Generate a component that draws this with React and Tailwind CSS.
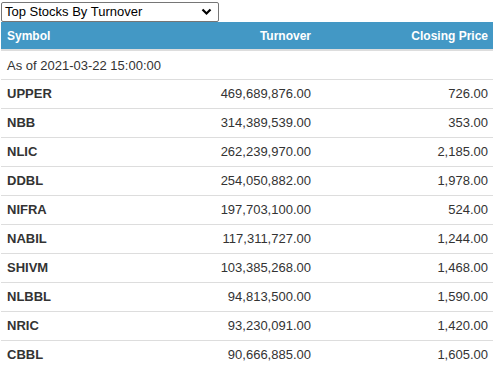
import React from 'react'

const rows = [
  ['UPPER', '469,689,876.00', '726.00'],
  ['NBB', '314,389,539.00', '353.00'],
  ['NLIC', '262,239,970.00', '2,185.00'],
  ['DDBL', '254,050,882.00', '1,978.00'],
  ['NIFRA', '197,703,100.00', '524.00'],
  ['NABIL', '117,311,727.00', '1,244.00'],
  ['SHIVM', '103,385,268.00', '1,468.00'],
  ['NLBBL', '94,813,500.00', '1,590.00'],
  ['NRIC', '93,230,091.00', '1,420.00'],
  ['CBBL', '90,666,885.00', '1,605.00'],
]

export default function App() {
  return (
    <div className="w-[493px] h-[369px] overflow-hidden bg-white text-[13px] text-[#333] font-['Liberation_Sans',Arial,sans-serif]">
      <div className="pt-[2px] pl-[1px]">
        <div className="relative w-[218px] h-[20px] border border-[#767676] rounded-[2px] bg-white flex items-center pl-[3px] text-[13px] text-black">
          Top Stocks By Turnover
          <svg className="absolute right-[6px] top-[5px]" width="11" height="8" viewBox="0 0 11 8">
            <path d="M1.5 1.5 L5.5 5.5 L9.5 1.5" fill="none" stroke="#000" strokeWidth="2.2" />
          </svg>
        </div>
      </div>
      <table className="ml-[1px] w-[492px] border-collapse">
        <thead>
          <tr className="bg-[#4398c5] text-white text-[12px] h-[28px] border-b-2 border-[#dddddd]">
            <th className="w-[160px] text-left pl-[6px] font-bold">Symbol</th>
            <th className="w-[155px] text-right pr-[5px] font-bold">Turnover</th>
            <th className="w-[177px] text-right pr-[5px] font-bold">Closing Price</th>
          </tr>
        </thead>
        <tbody>
          <tr className="h-[29px] border-b border-[#dddddd]">
            <td colSpan={3} className="pl-[6px] pt-[1px]">As of 2021-03-22 15:00:00</td>
          </tr>
          {rows.map(([sym, turn, close]) => (
            <tr key={sym} className="h-[29px] border-b border-[#dddddd]">
              <td className="pl-[6px] pt-[1px] font-bold">{sym}</td>
              <td className="text-right pr-[5px] pt-[1px]">{turn}</td>
              <td className="text-right pr-[5px] pt-[1px]">{close}</td>
            </tr>
          ))}
        </tbody>
      </table>
    </div>
  )
}
